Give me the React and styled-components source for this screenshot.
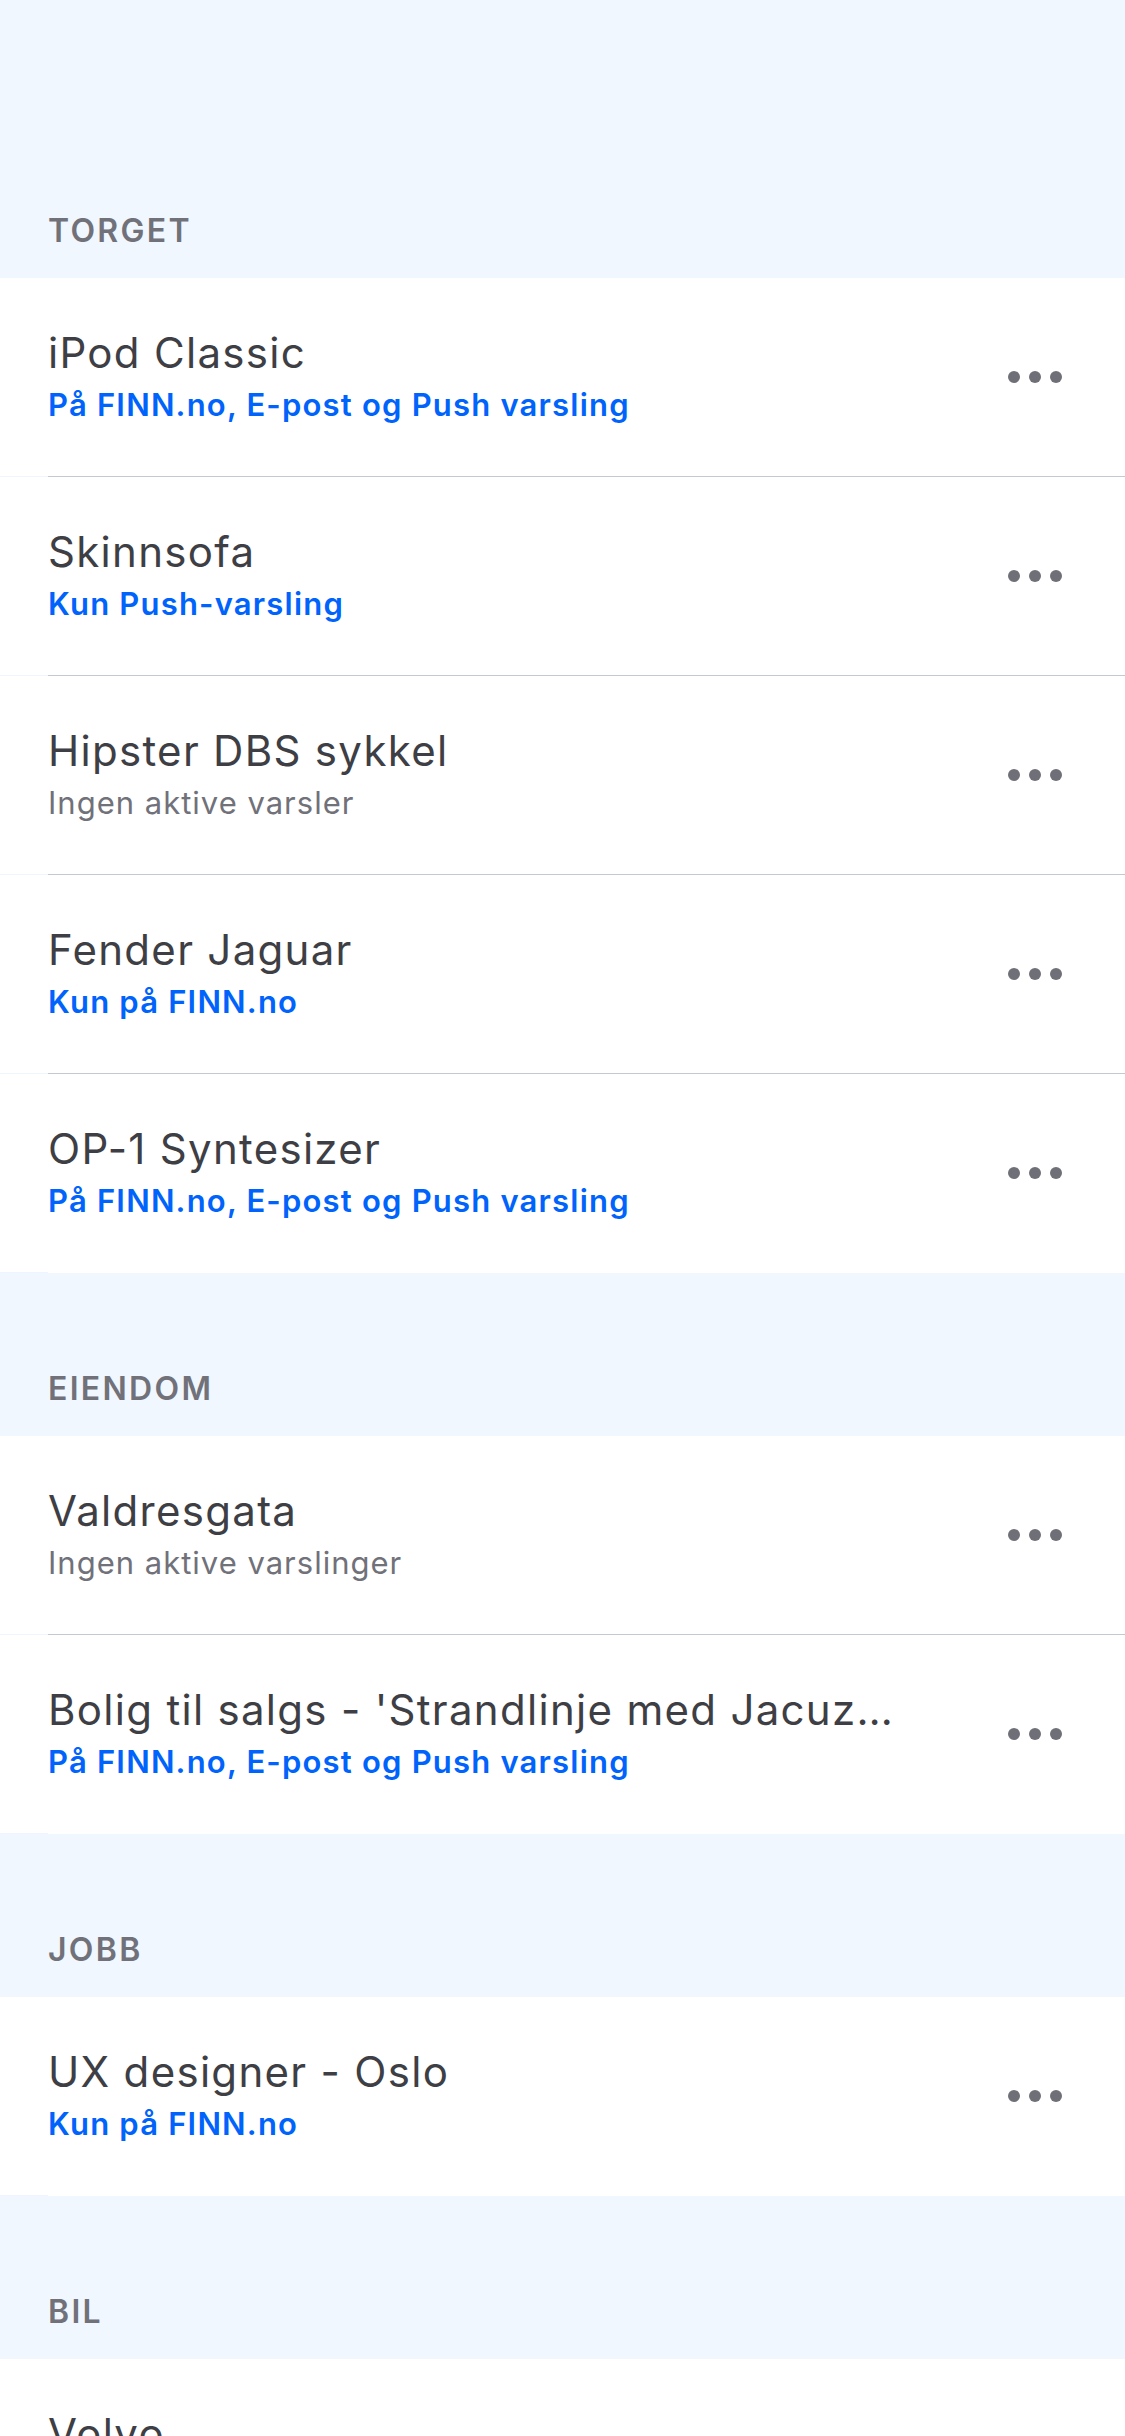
import React from 'react'
import styled, { createGlobalStyle } from 'styled-components'

const GlobalStyle = createGlobalStyle`
  * { box-sizing: border-box; }
  html, body {
    margin: 0;
    padding: 0;
    background: #f0f7fe;
    font-family: Inter, "Noto Sans", "Liberation Sans", sans-serif;
    -webkit-font-smoothing: antialiased;
  }
`;

const Page = styled.div`
  width: 1125px;
  height: 2436px;
  overflow: hidden;
  background: #f0f7fe;
`;

const SectionHeader = styled.div`
  padding: ${(props) => (props.first ? '211px' : '96px')} 48px 27px;
  font-size: 32px;
  line-height: 40px;
  font-weight: 600;
  letter-spacing: 2.3px;
  color: #71717a;
  text-transform: uppercase;
`;

const List = styled.div`
  background: #fff;
`;

const Row = styled.div`
  padding-left: 48px;
  background: linear-gradient(to top, #eef5fe 1px, #fff 1px);
`;

const RowInner = styled.div`
  display: flex;
  align-items: center;
  height: 199px;
  padding-right: 63px;
  border-bottom: 1px solid ${(props) => (props.last ? '#fff' : '#c3c8d1')};
`;

const Texts = styled.div`
  flex: 1;
  min-width: 0;
  display: flex;
  flex-direction: column;
  padding-right: 112px;
`;

const Title = styled.div`
  font-size: 42px;
  line-height: 56px;
  font-weight: 400;
  letter-spacing: 1.3px;
  color: #3e3e45;
  white-space: nowrap;
  overflow: hidden;
  text-overflow: ellipsis;
`;

const Status = styled.div`
  font-size: 31px;
  line-height: 48px;
  font-weight: ${(props) => (props.active ? 600 : 400)};
  letter-spacing: ${(props) => (props.active ? '1.2px' : '1px')};
  color: ${(props) => (props.active ? '#0063fb' : '#71717a')};
  white-space: nowrap;
`;

const MoreButton = styled.button`
  display: flex;
  gap: 9px;
  padding: 0;
  border: none;
  background: none;
  cursor: pointer;
`;

const Dot = styled.span`
  width: 12px;
  height: 12px;
  border-radius: 50%;
  background: #6f6f78;
`;

const sections = [
  {
    name: 'Torget',
    items: [
      { title: 'iPod Classic', status: 'På FINN.no, E-post og Push varsling', active: true },
      { title: 'Skinnsofa', status: 'Kun Push-varsling', active: true },
      { title: 'Hipster DBS sykkel', status: 'Ingen aktive varsler' },
      { title: 'Fender Jaguar', status: 'Kun på FINN.no', active: true },
      { title: 'OP-1 Syntesizer', status: 'På FINN.no, E-post og Push varsling', active: true },
    ],
  },
  {
    name: 'Eiendom',
    items: [
      { title: 'Valdresgata', status: 'Ingen aktive varslinger' },
      { title: "Bolig til salgs - 'Strandlinje med Jacuzzi'", status: 'På FINN.no, E-post og Push varsling', active: true },
    ],
  },
  {
    name: 'Jobb',
    items: [{ title: 'UX designer - Oslo', status: 'Kun på FINN.no', active: true }],
  },
  {
    name: 'Bil',
    items: [{ title: 'Volvo', status: 'Kun på FINN.no', active: true }],
  },
]

const App = () => {
  return (
    <Page>
      <GlobalStyle />
      {sections.map((section, i) => (
        <div key={section.name}>
          <SectionHeader first={i === 0}>{section.name}</SectionHeader>
          <List>
            {section.items.map((item, j) => (
              <Row key={item.title}>
                <RowInner last={j === section.items.length - 1}>
                  <Texts>
                    <Title>{item.title}</Title>
                    <Status active={item.active}>{item.status}</Status>
                  </Texts>
                  <MoreButton aria-label="Flere valg">
                    <Dot />
                    <Dot />
                    <Dot />
                  </MoreButton>
                </RowInner>
              </Row>
            ))}
          </List>
        </div>
      ))}
    </Page>
  )
}

export default App
